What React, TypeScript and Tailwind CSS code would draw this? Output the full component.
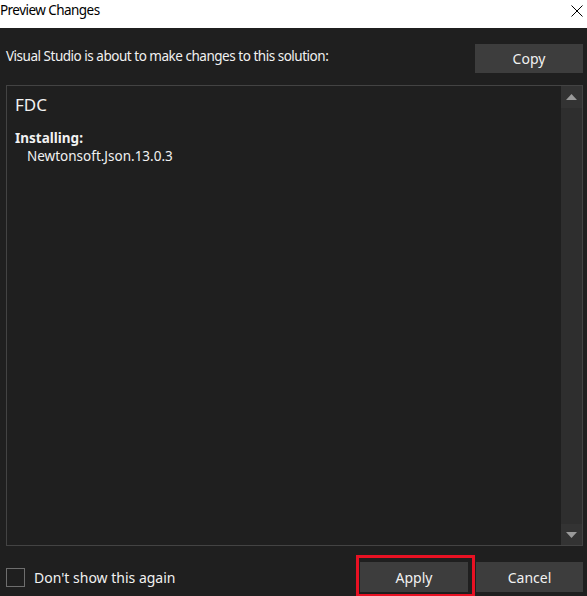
import React from 'react';

function CloseIcon() {
  return (
    <svg width="12" height="12" viewBox="0 0 12 12" className="mr-[4px]">
      <path d="M0.5 0.5 L11.5 11.5 M11.5 0.5 L0.5 11.5" stroke="#000" strokeWidth="1" fill="none" />
    </svg>
  );
}

function Arrow({ up }: { up?: boolean }) {
  return (
    <svg width="11" height="6" viewBox="0 0 11 6">
      <path d={up ? 'M0 6 L5.5 0 L11 6 Z' : 'M0 0 L11 0 L5.5 6 Z'} fill="#9a9a9a" />
    </svg>
  );
}

export default function App() {
  return (
    <div
      className="w-[587px] h-[596px] bg-[#1f1f1f] overflow-hidden text-[#f1f1f1]"
      style={{ fontFamily: '"Noto Sans", "Open Sans", sans-serif' }}
    >
      {/* title bar */}
      <div className="h-[28px] bg-white flex items-center justify-between">
        <span className="text-[13.5px] tracking-[-0.55px] text-black leading-none -mt-[6px]">Preview Changes</span>
        <div className="-mt-[7px]">
          <CloseIcon />
        </div>
      </div>

      <div className="pl-[6px] pr-[4px]">
        <div className="flex items-center justify-between mt-[16px]">
          <span className="text-[13.5px] tracking-[-0.48px] -mt-[5px]">Visual Studio is about to make changes to this solution:</span>
          <button className="w-[108px] h-[29px] bg-[#3d3d3d] text-[14px] text-[#f1f1f1]">Copy</button>
        </div>

        <div className="mt-[12px] h-[461px] border border-[#434343] flex">
          <div className="flex-1 pl-[8px] pt-[8px]">
            <div className="text-[17px] leading-[22px]">FDC</div>
            <div className="text-[13.5px] font-bold mt-[14px] leading-[17px]">Installing:</div>
            <div className="text-[13.5px] pl-[12px] leading-[18px]">Newtonsoft.Json.13.0.3</div>
          </div>
          <div className="w-[21px] bg-[#2e2e2e] flex flex-col">
            <div className="h-[22px] bg-[#333333] flex items-center justify-center">
              <Arrow up />
            </div>
            <div className="flex-1" />
            <div className="h-[21px] bg-[#333333] flex items-center justify-center">
              <Arrow />
            </div>
          </div>
        </div>

        <div className="flex items-center mt-[16px]">
          <div className="w-[19px] h-[19px] border border-[#6e6e6e]" />
          <span className="ml-[9px] text-[14px]">Don't show this again</span>
          <div className="flex-1" />
          <div className="relative">
            <button className="w-[108px] h-[30px] bg-[#3d3d3d] text-[14px] text-[#f1f1f1]">Apply</button>
            <div className="absolute left-[-4px] top-[-7px] w-[119px] h-[42px] border-[3px] border-[#e81123]" />
          </div>
          <button className="ml-[8px] w-[107px] h-[30px] bg-[#3d3d3d] text-[14px] text-[#f1f1f1]">Cancel</button>
        </div>
      </div>
    </div>
  );
}
